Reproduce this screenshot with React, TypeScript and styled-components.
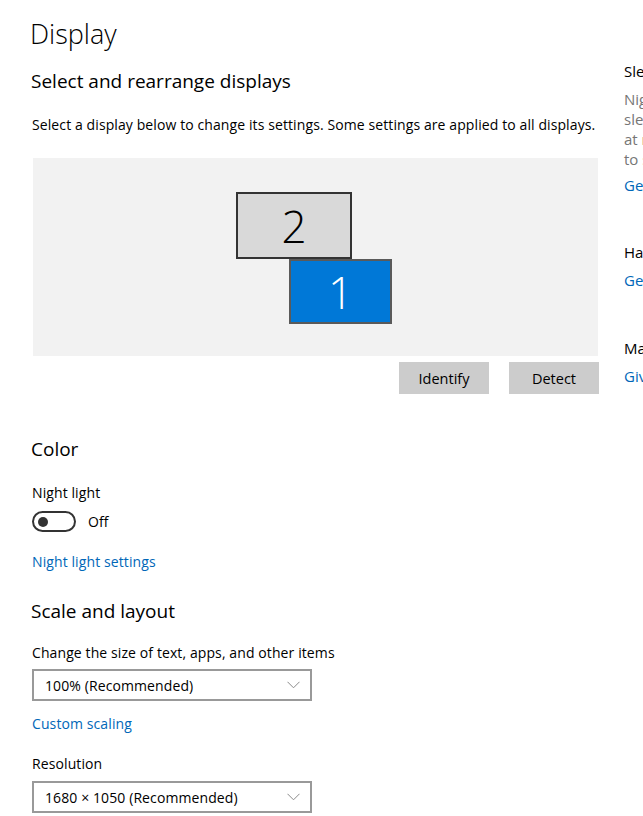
import React, { useState } from "react"
import styled, { createGlobalStyle } from "styled-components"

const FONT = `"Open Sans", "Noto Sans", "Liberation Sans", sans-serif`
const ACCENT = "#0067b8"

const GlobalStyle = createGlobalStyle`
  html, body {
    margin: 0;
    padding: 0;
    background: #ffffff;
    overflow: hidden;
  }
  body {
    font-family: ${FONT};
    color: #000000;
    -webkit-font-smoothing: antialiased;
  }
`

const Page = styled.div`
  display: flex;
  align-items: flex-start;
  width: 643px;
  height: 816px;
  padding-left: 30px;
  box-sizing: border-box;
  overflow: hidden;
`

const Main = styled.main`
  display: flex;
  flex-direction: column;
  width: 570px;
  flex-shrink: 0;
`

const Aside = styled.aside`
  display: flex;
  flex-direction: column;
  width: 260px;
  flex-shrink: 0;
  margin-left: 24px;
  padding-top: 61px;
`

const PageTitle = styled.h1`
  margin: 16px 0 0 0;
  font-size: 27px;
  font-weight: 300;
  line-height: 36px;
`

const SectionTitle = styled.h2<{ $top: number }>`
  margin: ${(p) => p.$top}px 0 0 1px;
  font-size: 19px;
  font-weight: 400;
  line-height: 28px;
`

const Text = styled.p<{ $top: number }>`
  margin: ${(p) => p.$top}px 0 0 2px;
  font-size: 14px;
  line-height: 20px;
  letter-spacing: 0.1px;
`

const Link = styled.a<{ $top: number }>`
  display: block;
  margin: ${(p) => p.$top}px 0 0 2px;
  font-size: 14px;
  line-height: 20px;
  letter-spacing: 0.1px;
  color: ${ACCENT};
  text-decoration: none;
  cursor: pointer;
`

const Canvas = styled.div`
  position: relative;
  width: 565px;
  height: 198px;
  margin: 23px 0 0 3px;
  background: #f2f2f2;
`

const Monitor = styled.div<{ $active?: boolean }>`
  position: absolute;
  display: flex;
  align-items: center;
  justify-content: center;
  box-sizing: border-box;
  font-size: 44px;
  font-weight: 300;
  line-height: 1;
  background: ${(p) => (p.$active ? "#0078d7" : "#d9d9d9")};
  color: ${(p) => (p.$active ? "#ffffff" : "#000000")};
  border: 2px solid ${(p) => (p.$active ? "#5a5a5a" : "#333333")};
  cursor: pointer;
`

const ButtonRow = styled.div`
  display: flex;
  justify-content: flex-end;
  gap: 20px;
  width: 569px;
  margin-top: 6px;
`

const Button = styled.button`
  width: 90px;
  height: 32px;
  border: none;
  background: #cccccc;
  font-family: ${FONT};
  font-size: 14.5px;
  color: #000000;
  padding: 0;
  cursor: pointer;
`

const ToggleRow = styled.div`
  display: flex;
  align-items: center;
  gap: 12px;
  margin: 8px 0 0 2px;
  font-size: 14px;
`

const Toggle = styled.button<{ $on: boolean }>`
  position: relative;
  width: 44px;
  height: 21px;
  box-sizing: border-box;
  padding: 0;
  border-radius: 11px;
  border: 2px solid ${(p) => (p.$on ? ACCENT : "#333333")};
  background: ${(p) => (p.$on ? ACCENT : "transparent")};
  cursor: pointer;

  &::after {
    content: "";
    position: absolute;
    top: 3.5px;
    left: ${(p) => (p.$on ? "26px" : "4px")};
    width: 10px;
    height: 10px;
    border-radius: 50%;
    background: ${(p) => (p.$on ? "#ffffff" : "#333333")};
  }
`

const Select = styled.div<{ $top: number }>`
  display: flex;
  align-items: center;
  justify-content: space-between;
  box-sizing: border-box;
  width: 280px;
  height: 32px;
  margin: ${(p) => p.$top}px 0 0 2px;
  padding: 0 10px 0 11px;
  border: 2px solid #999999;
  font-size: 14px;
  letter-spacing: 0.1px;
  cursor: pointer;
`

const AsideTitle = styled.div<{ $top: number }>`
  margin-top: ${(p) => p.$top}px;
  font-size: 15px;
  line-height: 20px;
`

const AsideText = styled.div`
  margin-top: 8px;
  font-size: 15px;
  line-height: 20px;
  color: #767676;
`

const AsideLink = styled.a<{ $top: number }>`
  margin-top: ${(p) => p.$top}px;
  font-size: 15px;
  line-height: 20px;
  color: ${ACCENT};
  text-decoration: none;
`

const Chevron = () => (
  <svg width="13" height="8" viewBox="0 0 13 8" fill="none">
    <path d="M0.5 0.8 L6.5 6.8 L12.5 0.8" stroke="#8a8a8a" strokeWidth="1" />
  </svg>
)

export default function App() {
  const [nightLight, setNightLight] = useState(false)

  return (
    <>
      <GlobalStyle />
      <Page>
        <Main>
          <PageTitle>Display</PageTitle>
          <SectionTitle $top={15}>Select and rearrange displays</SectionTitle>
          <Text $top={20}>Select a display below to change its settings. Some settings are applied to all displays.</Text>

          <Canvas>
            <Monitor style={{ left: 203, top: 34, width: 116, height: 67 }}>2</Monitor>
            <Monitor $active style={{ left: 256, top: 101, width: 103, height: 65 }}>1</Monitor>
          </Canvas>

          <ButtonRow>
            <Button>Identify</Button>
            <Button>Detect</Button>
          </ButtonRow>

          <SectionTitle $top={41}>Color</SectionTitle>
          <Text $top={20}>Night light</Text>
          <ToggleRow>
            <Toggle $on={nightLight} onClick={() => setNightLight(!nightLight)} aria-label="Night light" />
            <span>{nightLight ? "On" : "Off"}</span>
          </ToggleRow>
          <Link $top={20}>Night light settings</Link>

          <SectionTitle $top={25}>Scale and layout</SectionTitle>
          <Text $top={18}>Change the size of text, apps, and other items</Text>
          <Select $top={6}>
            <span>100% (Recommended)</span>
            <Chevron />
          </Select>
          <Link $top={13}>Custom scaling</Link>
          <Text $top={20}>Resolution</Text>
          <Select $top={7}>
            <span>1680 × 1050 (Recommended)</span>
            <Chevron />
          </Select>
        </Main>

        <Aside>
          <AsideTitle $top={0}>Sleep better</AsideTitle>
          <AsideText>
            Night light can help you get to
            <br />
            sleep by displaying warmer colors
            <br />
            at night. Select Night light settings
            <br />
            to set things up.
          </AsideText>
          <AsideLink $top={6}>Get help setting it up</AsideLink>
          <AsideTitle $top={47}>Have a question?</AsideTitle>
          <AsideLink $top={8}>Get help</AsideLink>
          <AsideTitle $top={48}>Make Windows better</AsideTitle>
          <AsideLink $top={8}>Give us feedback</AsideLink>
        </Aside>
      </Page>
    </>
  )
}
